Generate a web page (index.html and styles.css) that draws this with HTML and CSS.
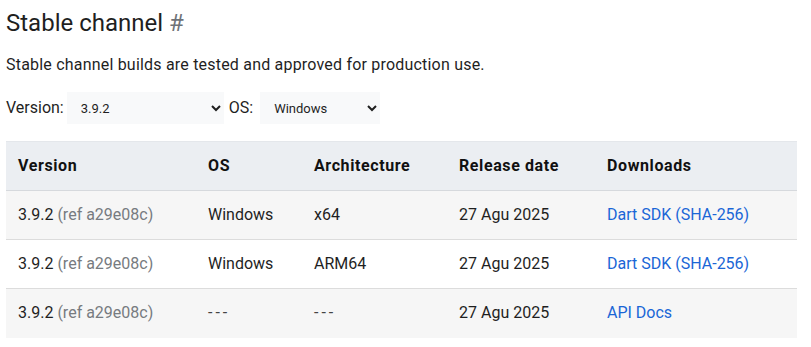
FILE: index.html
```html
<!DOCTYPE html>
<html lang="en">
  <head>
    <meta charset="UTF-8" />
    <meta name="viewport" content="width=device-width, initial-scale=1.0" />
    <title>Stable channel</title>
    <link rel="stylesheet" href="styles.css">
  </head>
  <body>
    <main class="channel">
      <h2 class="channel-title">
        Stable channel <a class="anchor" href="#stable">#</a>
      </h2>
      <p class="channel-desc">
        Stable channel builds are tested and approved for production use.
      </p>

      <!-- [1] Filters -->
      <div class="filters">
        <label for="version">Version:</label>
        <select id="version" class="select select-version">
          <option>3.9.2</option>
        </select>
        <label for="os">OS:</label>
        <select id="os" class="select select-os">
          <option>Windows</option>
        </select>
      </div>

      <!-- [2] Builds table -->
      <table class="builds">
        <thead>
          <tr>
            <th class="col-version">Version</th>
            <th class="col-os">OS</th>
            <th class="col-arch">Architecture</th>
            <th class="col-date">Release date</th>
            <th>Downloads</th>
          </tr>
        </thead>
        <tbody>
          <tr>
            <td>3.9.2 <span class="ref">(ref a29e08c)</span></td>
            <td>Windows</td>
            <td>x64</td>
            <td>27 Agu 2025</td>
            <td><a href="#">Dart SDK</a> <a href="#">(SHA-256)</a></td>
          </tr>
          <tr>
            <td>3.9.2 <span class="ref">(ref a29e08c)</span></td>
            <td>Windows</td>
            <td>ARM64</td>
            <td>27 Agu 2025</td>
            <td><a href="#">Dart SDK</a> <a href="#">(SHA-256)</a></td>
          </tr>
          <tr>
            <td>3.9.2 <span class="ref">(ref a29e08c)</span></td>
            <td><span class="none">---</span></td>
            <td><span class="none">---</span></td>
            <td>27 Agu 2025</td>
            <td><a href="#">API Docs</a></td>
          </tr>
        </tbody>
      </table>
    </main>
  </body>
</html>
```

FILE: styles.css
```css
* {
  margin: 0;
  padding: 0;
  box-sizing: border-box;
}
:root {
  --text: #1f1f1f;
  --muted: #777b80;
  --link: #1a66d6;
  --line: #dcdcdc;
  --head: #ebeef2;
  --stripe: #f6f6f6;
}
body {
  color: var(--text);
  background: #fff;
  font-family: Roboto, "Noto Sans", sans-serif;
  font-size: 16px;
  padding: 0 6px;
}

/* [1] Heading */
.channel-title {
  font-size: 24px;
  font-weight: 400;
  line-height: 32px;
  padding-top: 7px;
}
.channel-title .anchor {
  color: #6f7378;
  text-decoration: none;
}
.channel-desc {
  line-height: 24px;
  margin-top: 14px;
  letter-spacing: 0.2px;
}

/* [2] Filters */
.filters {
  display: flex;
  align-items: center;
  margin-top: 15px;
}
.filters label {
  line-height: 32px;
}
.select {
  height: 32px;
  border: none;
  border-radius: 0;
  font-family: inherit;
  font-size: 13px;
  color: var(--text);
  background-color: #f8f9fa;
  padding: 0 10px;
}
.select-version {
  width: 157px;
  margin: 0 5px 0 3px;
}
.select-os {
  width: 120px;
  margin-left: 7px;
}

/* [3] Table */
.builds {
  width: 791px;
  margin-top: 17px;
  border-collapse: collapse;
  text-align: left;
}
.builds th,
.builds td {
  height: 49px;
  padding: 0 12px;
  vertical-align: middle;
  font-weight: 400;
  line-height: 24px;
  border-bottom: 1px solid var(--line);
}
.builds th {
  font-weight: 700;
  font-size: 16px;
  letter-spacing: 0.6px;
  color: #111;
  background-color: var(--head);
  border-top: 1px solid #e4e7eb;
  border-bottom-color: #d6d9dd;
}
.builds tbody tr:nth-child(odd) td {
  background-color: var(--stripe);
}
.builds tbody tr:last-child td {
  border-bottom: none;
}
.col-version {
  width: 190px;
}
.col-os {
  width: 106px;
}
.col-arch {
  width: 145px;
}
.col-date {
  width: 148px;
}
.builds .ref {
  color: var(--muted);
}
.builds .none {
  letter-spacing: 3px;
  color: #444;
}
.builds a {
  color: var(--link);
  text-decoration: none;
}
```
